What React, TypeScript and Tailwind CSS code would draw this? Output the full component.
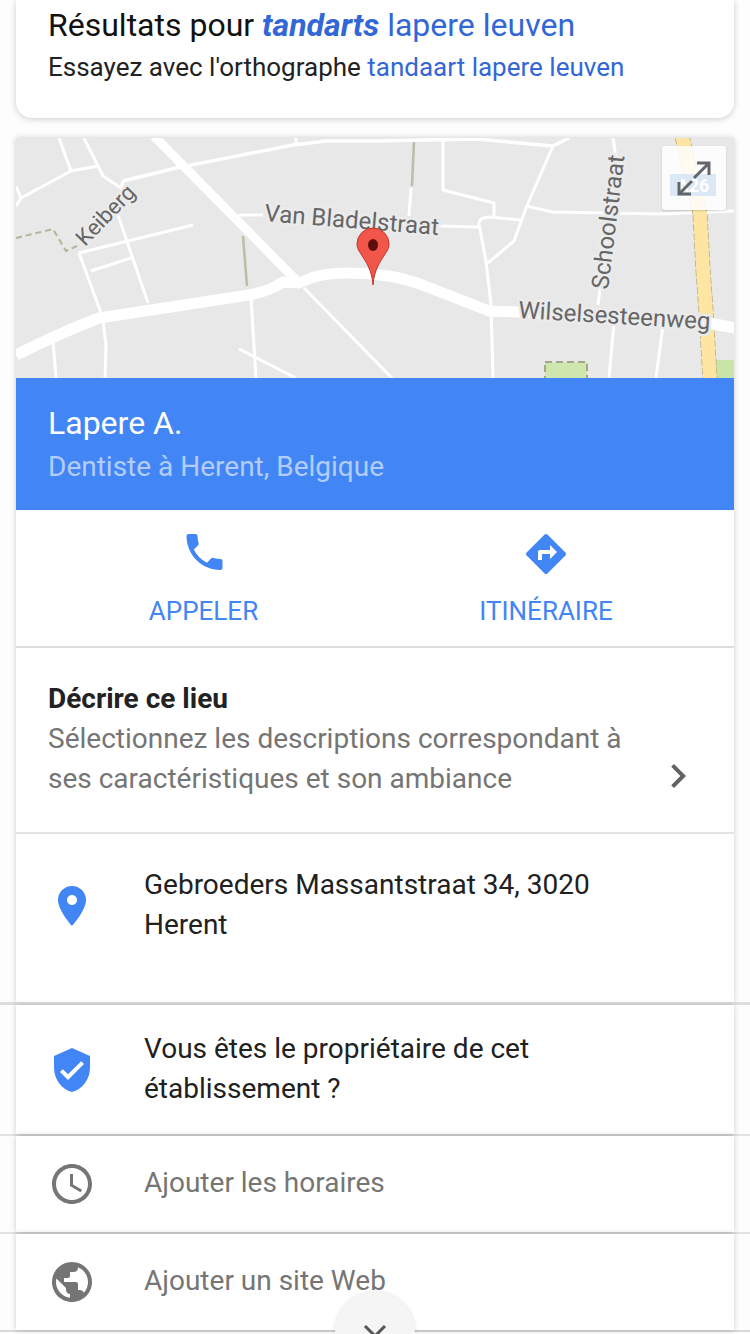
const ROADS = [
  { d: "M16 355 Q60 333 99 318 L249 295 Q270 291 283 282 L299 283 Q318 273 345 273 Q365 273 380 275 Q400 277 420 284 L489 311 L519 312 L709 323 L740 329", w: 11 },
  { d: "M154 136 L296 280", w: 9 },
  { d: "M123 181 L176 168 L293 145 L326 141 L376 141 L476 139 L553 146 L569 138", w: 3.5 },
  { d: "M296 138 L296 145", w: 3 },
  { d: "M59 138 L71 171 L21 198 L16 206", w: 3 },
  { d: "M16 186 L21 198", w: 3 },
  { d: "M84 138 L98 166 L71 171", w: 3 },
  { d: "M98 166 L103 176 L121 188 L123 181", w: 3 },
  { d: "M118 215 L148 303", w: 3 },
  { d: "M79 253 L193 225", w: 3 },
  { d: "M91 271 L131 258", w: 3 },
  { d: "M79 253 L101 313", w: 3 },
  { d: "M103 321 L106 345 L105 378", w: 3 },
  { d: "M53 341 L56 378", w: 3 },
  { d: "M251 298 L256 378", w: 3 },
  { d: "M304 288 L392 378", w: 3 },
  { d: "M239 349 L296 378", w: 3 },
  { d: "M239 215 L263 215", w: 3 },
  { d: "M438 226 L478 227", w: 3 },
  { d: "M411 188 L409 216", w: 3 },
  { d: "M443 141 L443 190 L494 203 L494 216", w: 3 },
  { d: "M521 220 L489 217 Q478 218 479 224 L486 261 L491 305 L493 378", w: 3 },
  { d: "M553 146 L526 208 L514 241 L488 263", w: 3 },
  { d: "M526 206 L553 212 L662 214 L734 211", w: 3 },
  { d: "M613 138 L616 158 L598 305", w: 3 },
  { d: "M614 323 L609 378", w: 3 },
  { d: "M663 325 L656 378", w: 3 },
];

const HIGHWAY = "M682 136 Q690 170 700 213 L703 270 L706 310 L710 380";

function MapView() {
  return (
    <svg viewBox="16 138 718 240" className="block h-[240px] w-[718px] bg-[#e8e8e8]">
      <path d="M414 141 L412 186" stroke="#bdbca6" strokeWidth="2.5" fill="none" />
      <path d="M243 236 L247 286" stroke="#bdbca6" strokeWidth="2.5" fill="none" />
      <path d="M16 238 L53 229 L66 251 L79 245" stroke="#b3b39c" strokeWidth="2" strokeDasharray="6 4" fill="none" />
      <rect x="545" y="362" width="42" height="18" fill="#cfe6ae" stroke="#a3a88a" strokeWidth="2" strokeDasharray="7 4" />
      <rect x="716" y="360" width="18" height="18" fill="#c9e4a8" />
      {ROADS.map((r) => (
        <path key={r.d} d={r.d} stroke="#ffffff" strokeWidth={r.w} fill="none" strokeLinejoin="round" />
      ))}
      <path d={HIGHWAY} stroke="#b9ab7c" strokeWidth="15" fill="none" strokeDasharray="7 2" />
      <path d={HIGHWAY} stroke="#fee5a2" strokeWidth="13.5" fill="none" />
      <path d="M660 321 L709 323 L740 329" stroke="#ffffff" strokeWidth="11" fill="none" />
      <rect x="670" y="174" width="46" height="22" fill="#1c66c3" />
      <text x="693" y="192" textAnchor="middle" fontSize="18" fontWeight="700" fill="#ffffff" fontFamily="Roboto, sans-serif">A26</text>
      <g fontFamily="Roboto, sans-serif" fontSize="24" fill="#666666" stroke="#ebebeb" strokeWidth="5" paintOrder="stroke">
        <text transform="translate(264 221) rotate(4.6)">Van Bladelstraat</text>
        <text transform="translate(85 247) rotate(-46)" fontSize="22">Keiberg</text>
        <text transform="translate(608 290) rotate(-83)">Schoolstraat</text>
        <text transform="translate(518 318) rotate(3.4)">Wilselsesteenweg</text>
      </g>
      <path d="M373 285 C372 270 366 262 361 254 C358 250 357 247 357 244 A16 16 0 0 1 389 244 C389 247 388 250 385 254 C380 262 374 270 373 285 Z" fill="#f2564a" stroke="#c4332a" strokeWidth="1" />
      <ellipse cx="373" cy="245" rx="5" ry="6" fill="#5f0f0b" />
    </svg>
  );
}

function MaterialIcon({ d, className }: { d: string; className: string }) {
  return (
    <svg viewBox="0 0 24 24" width={48} height={48} className={className} fill="currentColor">
      <path d={d} />
    </svg>
  );
}

const PHONE = "M6.62 10.79c1.44 2.83 3.76 5.14 6.59 6.59l2.2-2.2c.27-.27.67-.36 1.02-.24 1.12.37 2.33.57 3.57.57.55 0 1 .45 1 1V20c0 .55-.45 1-1 1-9.39 0-17-7.61-17-17 0-.55.45-1 1-1h3.5c.55 0 1 .45 1 1 0 1.25.2 2.45.57 3.57.11.35.03.74-.25 1.02l-2.2 2.2z";
const DIRECTIONS = "M21.71 11.29l-9-9c-.39-.39-1.02-.39-1.41 0l-9 9c-.39.39-.39 1.02 0 1.41l9 9c.39.39 1.02.39 1.41 0l9-9c.39-.38.39-1.01 0-1.41zM14 14.5V12h-4v3H8v-4c0-.55.45-1 1-1h5V7.5l3.5 3.5-3.5 3.5z";
const PLACE = "M12 2C8.13 2 5 5.13 5 9c0 5.25 7 13 7 13s7-7.75 7-13c0-3.87-3.13-7-7-7zm0 9.5c-1.38 0-2.5-1.12-2.5-2.5s1.12-2.5 2.5-2.5 2.5 1.12 2.5 2.5-1.12 2.5-2.5 2.5z";
const VERIFIED = "M12 1L3 5v6c0 5.55 3.84 10.74 9 12 5.16-1.26 9-6.45 9-12V5l-9-4zm-2 16l-4-4 1.41-1.41L10 14.17l6.59-6.59L18 9l-8 8z";
const CLOCK = "M11.99 2C6.47 2 2 6.48 2 12s4.47 10 9.99 10C17.52 22 22 17.52 22 12S17.52 2 11.99 2zM12 20c-4.42 0-8-3.58-8-8s3.58-8 8-8 8 3.58 8 8-3.58 8-8 8zm.5-13H11v6l5.25 3.15.75-1.23-4.5-2.67z";
const GLOBE = "M12 2C6.48 2 2 6.48 2 12s4.48 10 10 10 10-4.48 10-10S17.52 2 12 2zm-1 17.93c-3.95-.49-7-3.85-7-7.93 0-.62.08-1.21.21-1.79L9 15v1c0 1.1.9 2 2 2v1.93zm6.9-2.54c-.26-.81-1-1.39-1.9-1.39h-1v-3c0-.55-.45-1-1-1H8v-2h2c.55 0 1-.45 1-1V7h2c1.1 0 2-.9 2-2v-.41c2.93 1.19 5 4.06 5 7.41 0 2.08-.8 3.97-2.1 5.39z";
const CHEVRON = "M10 6L8.59 7.41 13.17 12l-4.58 4.59L10 18l6-6z";

export default function App() {
  return (
    <div className="relative h-[1334px] w-[750px] overflow-hidden bg-[#fdfdfd] font-['Roboto',sans-serif]">
      <div className="mx-4 h-[118px] rounded-b-[16px] bg-white px-8 shadow-[0_1px_6px_rgba(0,0,0,0.2)]">
        <p className="pt-[7px] text-[32px] leading-[36px] text-[#111]">
          Résultats pour <a className="text-[#3367d6]"><b className="italic">tandarts</b> lapere leuven</a>
        </p>
        <p className="pt-[6px] text-[26px] leading-[36px] text-[#222]">
          Essayez avec l'orthographe <a className="text-[#3367d6]">tandaart lapere leuven</a>
        </p>
      </div>

      <div className="mx-4 mt-5 bg-white shadow-[0_0_6px_rgba(0,0,0,0.2)]">
        <div className="relative">
          <MapView />
          <div className="absolute right-2 top-2 flex h-16 w-16 items-center justify-center rounded-[3px] bg-white/85 shadow-[0_1px_2px_rgba(0,0,0,0.15)]">
            <svg viewBox="0 0 40 40" width="40" height="40" fill="none" stroke="#63666b" strokeWidth="3">
              <path d="M23 5 H35 V17 M35 5 L20 20" />
              <path d="M5 24 V36 H17 M5 36 L18 23" />
            </svg>
          </div>
        </div>

        <div className="h-[132px] bg-[#4285f4] px-8 pt-[25px]">
          <p className="text-[32px] leading-[40px] text-white">Lapere A.</p>
          <p className="mt-[4px] text-[28px] leading-[40px] text-white/60">Dentiste à Herent, Belgique</p>
        </div>

        <div className="flex h-[138px] border-b-2 border-[#dcdcdc] text-[#4285f4]">
          <div className="flex w-[375px] flex-col items-center pt-[18px]">
            <MaterialIcon d={PHONE} className="translate-x-[0.5px]" />
            <span className="mt-[19px] text-[26px] leading-[32px]">APPELER</span>
          </div>
          <div className="ml-px flex w-[308px] flex-col items-center pt-[20px]">
            <MaterialIcon d={DIRECTIONS} className="" />
            <span className="mt-[17px] text-[26px] leading-[32px]">ITINÉRAIRE</span>
          </div>
        </div>

        <div className="relative h-[186px] border-b-2 border-[#e4e4e4] px-8 pt-[31px]">
          <p className="text-[28px] font-bold leading-[40px] text-[#222]">Décrire ce lieu</p>
          <p className="w-[600px] text-[28px] leading-[40px] text-[#757575]">
            Sélectionnez les descriptions correspondant à ses caractéristiques et son ambiance
          </p>
          <MaterialIcon d={CHEVRON} className="absolute left-[638px] top-[104px] text-[#616161]" />
        </div>

        <div className="flex h-[168px] items-start pl-8 pt-[31px]">
          <MaterialIcon d={PLACE} className="mt-[17px] text-[#4285f4]" />
          <p className="ml-[48px] w-[480px] text-[28px] leading-[40px] text-[#212121]">
            Gebroeders Massantstraat 34, 3020 Herent
          </p>
        </div>
      </div>

      <div className="h-[3px] w-full bg-[#dedede]" />

      <div className="w-full border-b-2 border-[#e2e2e2]">
        <div className="mx-4 flex h-[129px] items-start bg-white pl-8 pt-[24px] shadow-[0_0_6px_rgba(0,0,0,0.2)]">
          <MaterialIcon d={VERIFIED} className="mt-[17px] text-[#4285f4]" />
          <p className="ml-[48px] w-[480px] text-[28px] leading-[40px] text-[#212121]">
            Vous êtes le propriétaire de cet établissement ?
          </p>
        </div>
      </div>
      <div className="w-full border-b-2 border-[#e2e2e2]">
        <div className="mx-4 flex h-[96px] items-center bg-white pl-8 shadow-[0_0_6px_rgba(0,0,0,0.2)]">
          <MaterialIcon d={CLOCK} className="text-[#757575]" />
          <p className="ml-[48px] -translate-y-px text-[28px] leading-[40px] text-[#757575]">Ajouter les horaires</p>
        </div>
      </div>
      <div className="w-full border-b-2 border-[#d8d8d8]">
        <div className="mx-4 flex h-[96px] items-center bg-white pl-8 shadow-[0_0_6px_rgba(0,0,0,0.2)]">
          <MaterialIcon d={GLOBE} className="text-[#757575]" />
          <p className="ml-[48px] -translate-y-px text-[28px] leading-[40px] text-[#757575]">Ajouter un site Web</p>
        </div>
      </div>

      <div className="absolute left-[335px] top-[1292px] flex h-20 w-20 justify-center rounded-full bg-[#f5f5f5] pt-[32px] shadow-[0_0_4px_rgba(0,0,0,0.12)]">
        <svg viewBox="0 0 24 24" width="24" height="24" fill="none" stroke="#555" strokeWidth="3">
          <path d="M2 2 L22 22 M22 2 L2 22" />
        </svg>
      </div>
    </div>
  );
}
